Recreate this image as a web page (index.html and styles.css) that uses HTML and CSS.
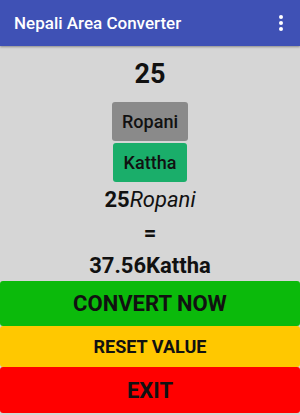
FILE: index.html
```html
<!DOCTYPE html>
<html lang="en">
<head>
    <meta charset="UTF-8">
    <meta name="viewport" content="width=device-width, initial-scale=1.0">
    <title>Nepali Area Converter</title>
    <link rel="stylesheet" href="styles.css">
</head>
<body>
    <div class="appbar">
        <span class="title">Nepali Area Converter</span>
        <span class="menu"><i></i><i></i><i></i></span>
    </div>
    <div class="content">
        <div class="value">25</div>
        <button class="unit from">Ropani</button>
        <button class="unit to">Kattha</button>
        <div class="line input">25<em>Ropani</em></div>
        <div class="line equals">=</div>
        <div class="line result">37.56Kattha</div>
    </div>
    <div class="actions">
        <button class="action convert">CONVERT NOW</button>
        <button class="action reset">RESET VALUE</button>
        <button class="action exit">EXIT</button>
    </div>
</body>
</html>
```

FILE: styles.css
```css
* {
    box-sizing: border-box;
    margin: 0;
    padding: 0;
}
body {
    font-family: Roboto, 'Liberation Sans', sans-serif;
    background: #d6d6d6;
    width: 300px;
    height: 415px;
    overflow: hidden;
}
.appbar {
    height: 46px;
    background: #3f51b5;
    display: flex;
    align-items: center;
    justify-content: space-between;
    padding: 0 14px 0 14px;
    box-shadow: 0 1px 2px rgba(0, 0, 0, 0.35);
}
.title {
    color: #fff;
    font-size: 17px;
    font-weight: 500;
}
.menu {
    display: flex;
    flex-direction: column;
    gap: 2px;
    margin-right: 3px;
}
.menu i {
    width: 4px;
    height: 4px;
    background: #fff;
    border-radius: 50%;
}
.content {
    display: flex;
    flex-direction: column;
    align-items: center;
}
.value {
    margin-top: 13px;
    font-size: 27px;
    font-weight: 700;
    line-height: 30px;
    color: #111;
}
button {
    font-family: inherit;
    border: none;
    cursor: pointer;
    color: #111;
}
.unit {
    font-size: 18px;
    font-weight: 500;
    border-radius: 3px;
    height: 39px;
}
.from {
    margin-top: 13px;
    width: 76px;
    background: #8a8a8a;
}
.to {
    margin-top: 2px;
    width: 74px;
    background: #1aae6a;
}
.line {
    font-size: 22px;
    line-height: 24px;
    color: #111;
}
.input {
    margin-top: 6px;
    font-weight: 700;
}
.input em {
    font-weight: 400;
}
.equals {
    margin-top: 9px;
    font-weight: 700;
}
.result {
    margin-top: 9px;
    font-weight: 700;
}
.actions {
    margin-top: 3px;
    display: flex;
    flex-direction: column;
}
.action {
    width: 100%;
    border-radius: 3px;
    font-weight: 700;
}
.convert {
    height: 45px;
    background: #0bba0b;
    font-size: 22px;
}
.reset {
    height: 41px;
    background: #ffc800;
    font-size: 18px;
}
.exit {
    height: 46px;
    background: #ff0000;
    font-size: 22px;
}
```
